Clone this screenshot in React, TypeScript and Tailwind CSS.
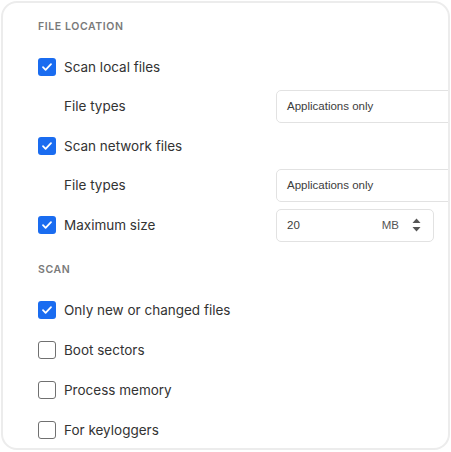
import React from "react";

type Row =
  | { kind: "check"; label: string; checked: boolean; control?: React.ReactNode }
  | { kind: "plain"; label: string; control?: React.ReactNode };

function Checkbox({ checked }: { checked: boolean }) {
  if (checked) {
    return (
      <span className="flex h-[18px] w-[18px] shrink-0 items-center justify-center rounded-[3px] bg-[#1a6cf0]">
        <svg width="12" height="12" viewBox="0 0 12 12" fill="none">
          <path d="M2 6.2l2.6 2.6L10 3.2" stroke="white" strokeWidth="1.8" strokeLinecap="round" strokeLinejoin="round" />
        </svg>
      </span>
    );
  }
  return <span className="h-[18px] w-[18px] shrink-0 rounded-[3px] border-[1.5px] border-[#707070] bg-white" />;
}

function SelectBox({ value }: { value: string }) {
  return (
    <div className="flex h-[33px] w-[220px] shrink-0 items-center rounded-[5px] border border-[#e2e2e2] bg-white pl-[10px] text-[11.5px] text-[#3c3c3c] [font-family:'Liberation_Sans',Arial,sans-serif]">
      {value}
    </div>
  );
}

function NumberBox() {
  return (
    <div className="flex h-[33px] w-[158px] shrink-0 items-center rounded-[5px] border border-[#e2e2e2] bg-white pl-[10px] pr-[6px] text-[11.5px] text-[#3c3c3c] [font-family:'Liberation_Sans',Arial,sans-serif]">
      <span className="flex-1">20</span>
      <span className="mr-[12px] text-[#555]">MB</span>
      <svg width="11" height="18" viewBox="0 0 11 18" className="mr-[5px]">
        <path d="M1.5 7L5.5 2.5 9.5 7z" fill="#555" />
        <path d="M1.5 11L5.5 15.5 9.5 11z" fill="#555" />
      </svg>
    </div>
  );
}

function Section({ title, rows, rowHeight }: { title: string; rows: Row[]; rowHeight: string }) {
  return (
    <div>
      <div className="flex h-10 items-center text-[10.5px] font-semibold tracking-[0.6px] text-[#7a7a7a]">
        {title}
      </div>
      {rows.map((r) => (
        <div key={r.label + (r.kind === "plain" ? "p" : "c")} className={`flex items-center ${rowHeight}`}>
          <div className="flex w-[238px] shrink-0 items-center gap-[8px]">
            {r.kind === "check" ? <Checkbox checked={r.checked} /> : <span className="w-[18px]" />}
            <span className="text-[13.5px] text-[#333]">{r.label}</span>
          </div>
          {r.control}
        </div>
      ))}
    </div>
  );
}

export default function App() {
  const fileRows: Row[] = [
    { kind: "check", label: "Scan local files", checked: true },
    { kind: "plain", label: "File types", control: <SelectBox value="Applications only" /> },
    { kind: "check", label: "Scan network files", checked: true },
    { kind: "plain", label: "File types", control: <SelectBox value="Applications only" /> },
    { kind: "check", label: "Maximum size", checked: true, control: <NumberBox /> },
  ];
  const scanRows: Row[] = [
    { kind: "check", label: "Only new or changed files", checked: true },
    { kind: "check", label: "Boot sectors", checked: false },
    { kind: "check", label: "Process memory", checked: false },
    { kind: "check", label: "For keyloggers", checked: false },
  ];

  return (
    <div className="h-[452px] w-[451px] bg-white p-px [font-family:Inter,'Open_Sans',sans-serif]">
      <div className="h-[449px] w-[449px] overflow-hidden rounded-[16px] border-2 border-[#ececec] bg-white pl-[35px] pt-[4px]">
        <Section title="FILE LOCATION" rows={fileRows} rowHeight="h-[39.6px]" />
        <div className="mt-[5px]">
          <Section title="SCAN" rows={scanRows} rowHeight="h-10" />
        </div>
      </div>
    </div>
  );
}
